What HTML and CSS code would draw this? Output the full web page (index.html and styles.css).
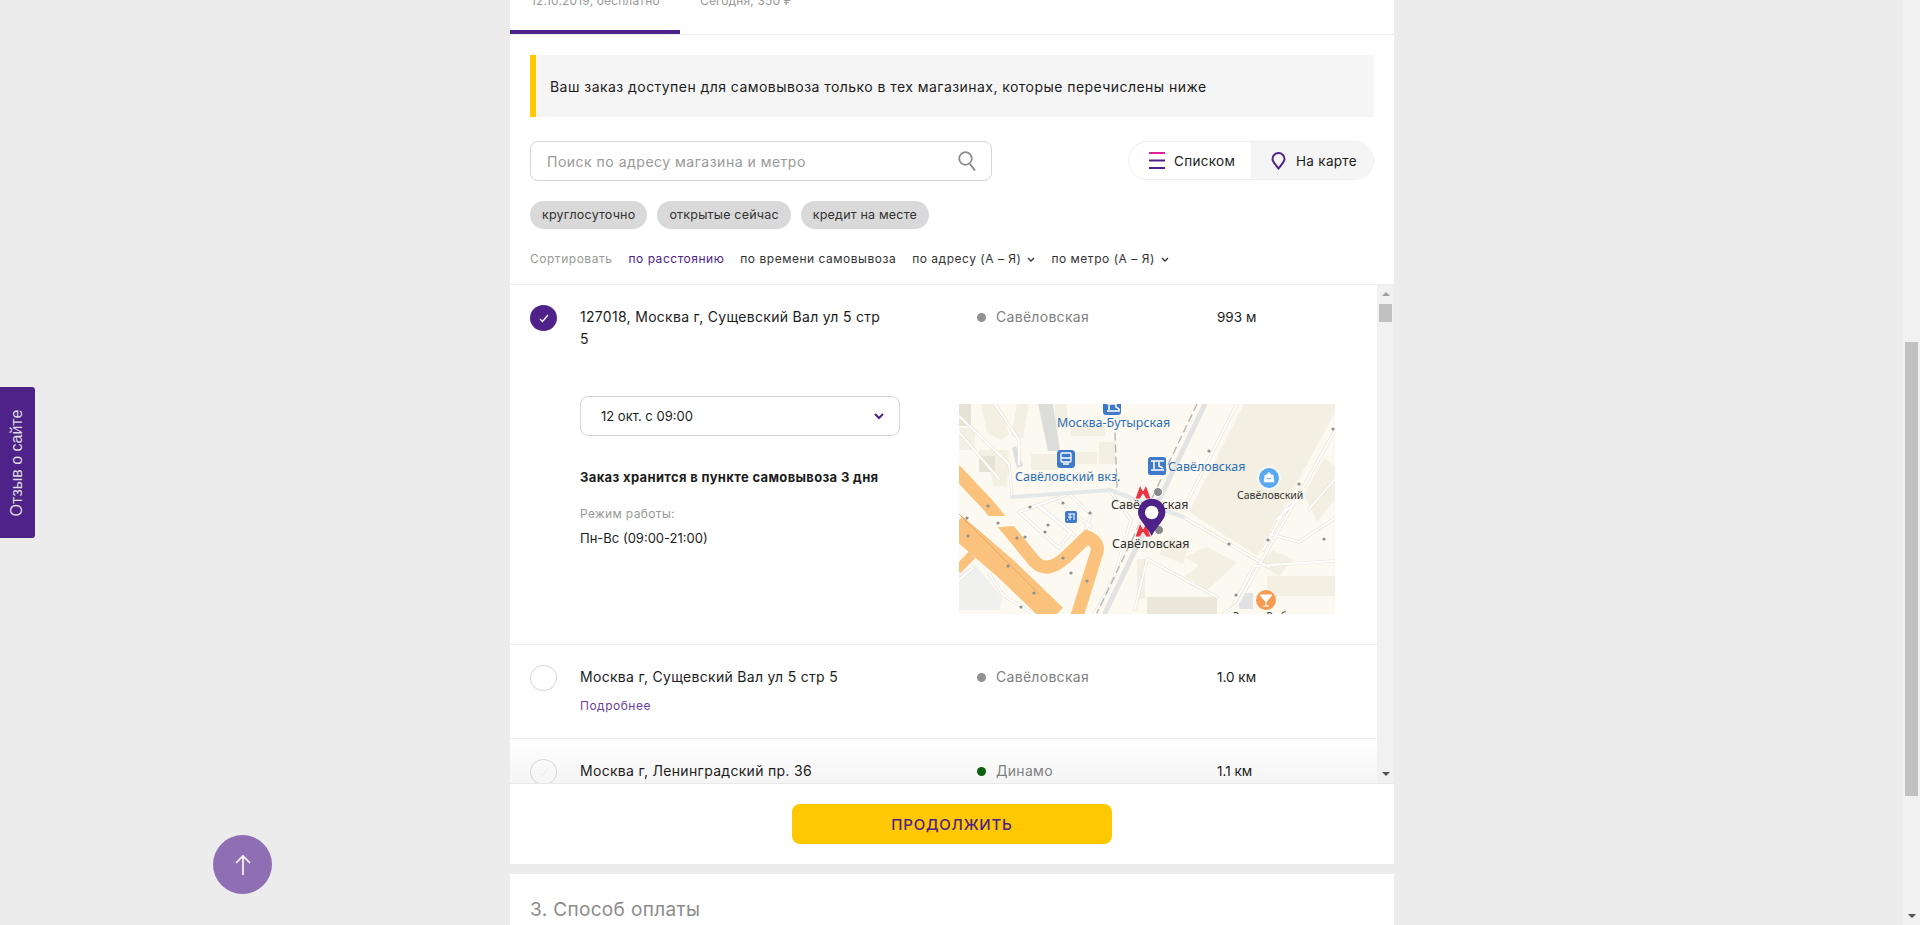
FILE: index.html
```html
<!DOCTYPE html>
<html>
    <head>
        <meta charset="UTF-8">
        <title>Способ получения</title>
        <link rel="stylesheet" href="styles.css">
    </head>
    <body>
        <a class="feedback" href="#"><span>Отзыв о сайте</span></a>
        <a class="to-top" href="#">
            <svg width="18" height="22" viewBox="0 0 18 22"><path d="M2 9 9 2l7 7M9 2v19" fill="none" stroke="#fff" stroke-width="1.6"/></svg>
        </a>

        <main class="page">
            <section class="card">
                <div class="tabs">
                    <div class="tab active">12.10.2019, бесплатно</div>
                    <div class="tab">Сегодня, 350 ₽</div>
                </div>

                <div class="controls">
                    <div class="notice">Ваш заказ доступен для самовывоза только в тех магазинах, которые перечислены ниже</div>

                    <div class="search-row">
                        <div class="search">
                            <span>Поиск по адресу магазина и метро</span>
                            <svg width="18" height="20" viewBox="0 0 18 20"><circle cx="7.5" cy="7.5" r="6.3" fill="none" stroke="#8c8c8c" stroke-width="1.8"/><path d="m12 13 5 6.5" stroke="#8c8c8c" stroke-width="2"/></svg>
                        </div>
                        <div class="view-toggle">
                            <div class="view-btn">
                                <svg width="16" height="17" viewBox="0 0 16 17"><path d="M0 1h16" stroke="#e0219a" stroke-width="2"/><path d="M0 8.5h16M0 16h16" stroke="#4e2289" stroke-width="2"/></svg>
                                Списком
                            </div>
                            <div class="view-btn off">
                                <svg width="15" height="18" viewBox="0 0 15 18"><path d="M7.500 16.500C5 13 1.500 10 1.500 7a6 6 0 0 1 12 0c0 3-3.500 6-6 9.500Z" fill="none" stroke="#4e2289" stroke-width="2"/></svg>
                                На карте
                            </div>
                        </div>
                    </div>

                    <div class="chips">
                        <span class="chip">круглосуточно</span>
                        <span class="chip">открытые сейчас</span>
                        <span class="chip">кредит на месте</span>
                    </div>

                    <div class="sort">
                        <span class="sort-title">Сортировать</span>
                        <span class="sort-current">по расстоянию</span>
                        <span>по времени самовывоза</span>
                        <span>по адресу (А – Я) <svg class="caret" width="8" height="5" viewBox="0 0 8 5"><path d="m1 1 3 3 3-3" fill="none" stroke="#333" stroke-width="1.300"/></svg></span>
                        <span>по метро (А – Я) <svg class="caret" width="8" height="5" viewBox="0 0 8 5"><path d="m1 1 3 3 3-3" fill="none" stroke="#333" stroke-width="1.300"/></svg></span>
                    </div>
                </div>

                <div class="list-wrap">
                    <div class="list">
                        <div class="shop first">
                            <div class="shop-head">
                                <span class="radio checked">
                                    <svg width="10" height="9" viewBox="0 0 10 9"><path d="m1 5 2.500 2.500L9 1" fill="none" stroke="#fff" stroke-width="1.300"/></svg>
                                </span>
                                <div class="address">127018, Москва г, Сущевский Вал ул 5 стр<br>5</div>
                                <div class="metro"><i class="dot grey"></i>Савёловская</div>
                                <div class="distance">993 м</div>
                            </div>
                            <div class="detail">
                                <div class="detail-left">
                                    <div class="date-select">
                                        12 окт. с 09:00
                                        <svg width="10" height="7" viewBox="0 0 10 7"><path d="m1 1 4 4 4-4" fill="none" stroke="#4e2289" stroke-width="2"/></svg>
                                    </div>
                                    <div class="keep">Заказ хранится в пункте самовывоза 3 дня</div>
                                    <div class="hours-title">Режим работы:</div>
                                    <div class="hours">Пн-Вс (09:00-21:00)</div>
                                </div>
                                <svg class="map" width="376" height="210" viewBox="0 0 376 210">
                                    <defs>
                                        <path id="lanes" d="M0 28 40 75M60 108l40 36 12-16-34-28M80 103l42 34M100 97l32 26M60 108l50-18 22 20-12 36M0 12 50 60l3 32M36 0l24 36v24M150 86l22 30-18 60-18 33M224 113l86 50M278 0 224 106M378 23 278 201 264 210M340 80l-36 66M350 105l26-30M318 115l22-20M310 130l30 8 36-24M30 170l15 22 30 18M176 205l12-50 70 38M0 176l14-12M275 200l20-38 80-5"/>
                                    </defs>
                                    <rect width="376" height="210" fill="#fcf9f1"/>

                                    <g fill="#f3efe3">
                                        <path d="M285 0h85l5 10-77 142-68-44Z"/>
                                        <path d="M22 0h18l10 30-8 6-14-8ZM0 24h16v22H0Z"/>
                                        <path d="M20 46h30l-2 36H34l-2-14H20Z"/>
                                        <path d="M58 0h12l-6 34-12-2ZM96 0h12v24H96ZM112 22h34v10h-34ZM140 38h16v22h-16Z"/>
                                        <path d="M72 50h28v16H72ZM116 48h22v12h-22Z"/>
                                        <path d="M178 155h8v40h-8Z"/>
                                        <path d="M248 143l30 16-30 27-22-14 14-10-14-9ZM224 160l-24-10 12-18 18 10Z"/>
                                        <path d="M188 193h70v17h-70Z" fill="#ebe7da"/>
                                        <path d="M340 0h36v8l-8 16ZM345 90l20-36 11 8v34l-18 22ZM300 160l14-14 20 10-14 16ZM308 172h68v20h-68Z"/>
                                    </g>
                                    <path d="M0 0h12v22H0ZM20 52h16v16H20Z" fill="#e6e2d5"/>
                                    <path d="M79 0h15l7 47H89Z" fill="#dcdcdb"/>
                                    <path d="M57 42l7 20-6 2-5-20Z" fill="#dcdddc"/>
                                    <path d="M0 171l16-10 27 32-2 13H0Z" fill="#f0f0ee"/>
                                    <path d="M280 189h14v16h-14Z" fill="#dfe1e2"/>

                                    <g fill="none" stroke-linejoin="round" stroke-linecap="round">
                                        <use href="#lanes" stroke="#e8e5da" stroke-width="3.200"/>
                                        <use href="#lanes" stroke="#fff" stroke-width="1.800"/>
                                        <path d="M53 93l98-7 73 27" stroke="#e5e8e8" stroke-width="4"/>
                                        <path d="M246 0 146 209" stroke="#e2e3e2" stroke-width="5"/>
                                        <path d="M238 0 138 209M156 29l2 54" stroke="#b6b8b8" stroke-width="1.400" stroke-dasharray="7 5"/>
                                    </g>

                                    <g fill="none" stroke="#fac27d">
                                        <path d="M-4 121 46 164 96 212" stroke-width="23"/>
                                        <path d="M-4 66 29 101 76 158Q88 170 106 154L128 133Q140 138 138 148L118 212" stroke-width="13"/>
                                        <path d="M-2 166 13 151" stroke-width="9"/>
                                    </g>
                                    <path d="M-4 106 80 190" fill="none" stroke="#e4a867" stroke-width="1"/>
                                    <path d="M30 112h18l8 10-16 1-10 6Z" fill="#fcf9f1"/>

                                    <g fill="#8f8f8f">
                                        <circle cx="29" cy="102" r="1.600"/><circle cx="39" cy="119" r="1.600"/><circle cx="58" cy="134" r="1.600"/>
                                        <circle cx="71" cy="103" r="1.600"/><circle cx="89" cy="121" r="1.600"/><circle cx="104" cy="99" r="1.600"/>
                                        <circle cx="131" cy="109" r="1.600"/><circle cx="66" cy="133" r="1.600"/><circle cx="86" cy="128" r="1.600"/>
                                        <circle cx="49" cy="162" r="1.600"/><circle cx="104" cy="154" r="1.600"/><circle cx="128" cy="177" r="1.600"/>
                                        <circle cx="112" cy="169" r="1.600"/><circle cx="75" cy="189" r="1.600"/><circle cx="62" cy="203" r="1.600"/>
                                        <circle cx="250" cy="47" r="1.600"/><circle cx="374" cy="25" r="1.600"/><circle cx="340" cy="80" r="1.600"/>
                                        <circle cx="309" cy="136" r="1.600"/><circle cx="270" cy="140" r="1.600"/><circle cx="277" cy="191" r="1.600"/>
                                        <circle cx="8" cy="114" r="1.600"/><circle cx="9" cy="132" r="1.600"/><circle cx="365" cy="135" r="1.600"/>
                                    </g>

                                    <rect x="144" y="-8" width="18" height="19" rx="3" fill="#3f79c9"/>
                                    <path d="M148 0h9v3l3 2v2h-12M150 1v5" fill="none" stroke="#fff" stroke-width="1.500"/>
                                    <rect x="98" y="46" width="18" height="18" rx="3.500" fill="#3f79c9"/>
                                    <path d="M103 49h8q1 0 1 1v7q0 1-1 1h-8q-1 0-1-1v-7q0-1 1-1ZM102 54h10M104 60h6" fill="none" stroke="#fff" stroke-width="1.300"/>
                                    <rect x="189" y="53" width="18" height="18" rx="2.500" fill="#3f79c9"/>
                                    <path d="M192 57h13M195 57v8M192 66h13M200 58v4l4 2" fill="none" stroke="#fff" stroke-width="1.500"/>
                                    <rect x="106" y="107" width="12" height="12" rx="2" fill="#3f79c9"/>
                                    <path d="M109 110h7M111 110v6M115 110v6M109 113h4M108 116h1" fill="none" stroke="#fff"/>

                                    <circle cx="310" cy="74" r="12" fill="#fff" opacity=".5"/>
                                    <circle cx="310" cy="74" r="10" fill="#5aa9f0"/>
                                    <path d="M306 71h8l1 7h-10ZM308 71q2-5 4 0" fill="#fff" stroke="#fff" stroke-width=".6"/>
                                    <path d="M307.500 74q2.500 2 5 0" fill="none" stroke="#5aa9f0"/>
                                    <circle cx="307" cy="196" r="10" fill="#f79a52"/>
                                    <path d="M301 191h12l-6 7ZM307 197v5M304 202h6" fill="#fff" stroke="#fff"/>

                                    <path d="M176 95l5-14 3 6 3-6 5 14h-5l-3-5-3 5Z" fill="#ef3340" stroke="#fff" stroke-width=".8"/>
                                    <path d="M176 133l5-14 3 6 3-6 5 14h-5l-3-5-3 5Z" fill="#ef3340" stroke="#fff" stroke-width=".8"/>
                                    <circle cx="199" cy="88" r="4.500" fill="#8a8a8a" stroke="#fff"/>
                                    <circle cx="200" cy="126" r="4.500" fill="#8a8a8a" stroke="#fff"/>

                                    <g class="map-label blue">
                                        <text x="98" y="23">Москва-Бутырская</text>
                                        <text x="56" y="77">Савёловский вкз.</text>
                                        <text x="209" y="67">Савёловская</text>
                                    </g>
                                    <g class="map-label dark">
                                        <text x="152" y="105">Савёловская</text>
                                        <text x="153" y="144">Савёловская</text>
                                        <text class="small" x="278" y="95">Савёловский</text>
                                        <text class="small" x="274" y="216">Залив Рыба</text>
                                    </g>

                                    <path d="M192.700 132C188 122 179 116 179 108.500a13.700 13.700 0 0 1 27.400 0C206.400 116 197.500 122 192.700 132Z" fill="#4e2289"/>
                                    <circle cx="192.700" cy="108.500" r="6.800" fill="#fff"/>
                                </svg>
                            </div>
                        </div>

                        <div class="shop">
                            <div class="shop-head">
                                <span class="radio"></span>
                                <div class="address">Москва г, Сущевский Вал ул 5 стр 5<a class="more" href="#">Подробнее</a></div>
                                <div class="metro"><i class="dot grey"></i>Савёловская</div>
                                <div class="distance">1.0 км</div>
                            </div>
                        </div>

                        <div class="shop last">
                            <div class="shop-head">
                                <span class="radio">
                                    <svg width="10" height="9" viewBox="0 0 10 9"><path d="m1 5 2.500 2.500L9 1" fill="none" stroke="#eee" stroke-width="1.300"/></svg>
                                </span>
                                <div class="address">Москва г, Ленинградский пр. 36</div>
                                <div class="metro"><i class="dot green"></i>Динамо</div>
                                <div class="distance">1.1 км</div>
                            </div>
                        </div>
                    </div>

                    <div class="list-bar">
                        <i class="arrow-up"></i>
                        <b class="list-thumb"></b>
                        <i class="arrow-down"></i>
                    </div>
                </div>

                <div class="actions">
                    <button class="continue">ПРОДОЛЖИТЬ</button>
                </div>
            </section>

            <section class="card next">
                <h2>3. Способ оплаты</h2>
            </section>
        </main>

        <div class="page-bar">
            <b class="page-thumb"></b>
            <i class="arrow-down"></i>
        </div>
    </body>
</html>
```

FILE: styles.css
```css
*{
    box-sizing:border-box;
}

html, body{
    height:925px;
    overflow:hidden;
}

body{
    margin:0;
    display:flex;
    background-color:#ececec;
    color:#1c1c1c;
    font-family:Inter, "Noto Sans", sans-serif;
    font-size:14px;
    letter-spacing:.3px;
}

a{
    text-decoration:none;
}

.page{
    flex:1;
    min-width:0;
}

.card{
    width:884px;
    margin-left:510px;
    background-color:#fff;
}

.next{
    margin-top:10px;
    padding:27px 20px 0;
    height:60px;
}

.next h2{
    margin:0;
    font-size:19px;
    font-weight:400;
    letter-spacing:.35px;
    line-height:18px;
    color:#8c8c8c;
}

/* tabs are scrolled half out of view */
.tabs{
    display:flex;
    height:70px;
    margin-top:-35px;
    border-bottom:1px solid #eee;
}

.tab{
    width:170px;
    padding-top:28px;
    padding-left:21px;
    color:#999;
    font-size:12px;
    letter-spacing:.15px;
}

.tab.active{
    border-bottom:4px solid #4e2289;
    height:69px;
}

.tab + .tab{
    padding-left:20px;
}

.controls{
    padding:20px 20px 16px;
}

.notice{
    display:flex;
    align-items:center;
    height:62px;
    padding-left:14px;
    border-left:6px solid #ffc800;
    background-color:#f5f5f5;
    letter-spacing:.45px;
}

.search-row{
    display:flex;
    justify-content:space-between;
    margin-top:24px;
}

.search{
    display:flex;
    justify-content:space-between;
    align-items:center;
    width:462px;
    height:40px;
    padding:0 15px 0 16px;
    border:1px solid #d6d6d6;
    border-radius:8px;
    color:#999;
    letter-spacing:.5px;
}

.view-toggle{
    display:flex;
    width:246px;
    height:39px;
    border:1px solid #eee;
    border-radius:20px;
    overflow:hidden;
    font-size:13.500px;
}

.view-btn{
    display:flex;
    align-items:center;
    gap:9px;
    width:123px;
    padding-left:20px;
}

.view-btn.off{
    gap:10px;
    background-color:#f5f5f5;
    padding-left:20px;
}

.chips{
    display:flex;
    gap:10px;
    margin-top:20px;
}

.chip{
    display:flex;
    align-items:center;
    height:28px;
    padding:0 12px 2px;
    border-radius:14px;
    background-color:#d9d9d9;
    color:#333;
    font-size:12.500px;
    letter-spacing:.2px;
}

.sort{
    display:flex;
    gap:16px;
    align-items:center;
    height:20px;
    margin-top:19px;
    color:#333;
    font-size:12px;
    letter-spacing:.52px;
}

.sort-title{
    color:#999;
}

.sort-current{
    color:#4e2289;
}

.caret{
    margin-left:2px;
    vertical-align:1px;
}

.list-wrap{
    display:flex;
    height:500px;
    border-top:1px solid #eee;
    border-bottom:1px solid #e8e8e8;
    overflow:hidden;
}

.list{
    flex:1;
    min-width:0;
}

.shop{
    padding:20px 0 0 20px;
    height:94px;
    border-bottom:1px solid #eee;
}

.shop.first{
    height:360px;
}

.shop.last{
    height:44px;
    border-bottom:none;
    background:linear-gradient(to bottom, #fff, #f5f5f5);
}

.shop-head{
    display:grid;
    grid-template-columns:50px 397px 240px 1fr;
}

.radio{
    display:flex;
    align-items:center;
    justify-content:center;
    width:27px;
    height:26px;
    border:1px solid #d9d9d9;
    border-radius:50%;
    background-color:#fff;
}

.shop.last .radio{
    background-color:transparent;
}

.radio.checked{
    border:none;
    background-color:#4e2289;
}

.address, .metro, .distance{
    padding-top:1px;
    line-height:22px;
}

.distance{
    font-size:13.500px;
    letter-spacing:0;
}

.more{
    display:block;
    margin-top:7px;
    color:#6b3fa0;
    font-size:12px;
    letter-spacing:.5px;
    line-height:22px;
}

.metro{
    color:#808080;
}

.dot{
    display:inline-block;
    width:9px;
    height:9px;
    margin-right:10px;
    border-radius:50%;
}

.grey{
    background-color:#919191;
}

.green{
    background-color:#0b5e12;
}

.detail{
    display:flex;
    gap:59px;
    margin:46px 0 0 50px;
    font-size:13px;
    letter-spacing:0;
}

.detail-left{
    width:320px;
}

.date-select{
    display:flex;
    justify-content:space-between;
    align-items:center;
    height:40px;
    padding:0 15px 0 20px;
    border:1px solid #d6d6d6;
    border-radius:8px;
}

.keep{
    margin-top:32px;
    font-weight:700;
    letter-spacing:.35px;
    line-height:18px;
}

.hours-title{
    margin-top:19px;
    color:#999;
    font-size:12px;
    letter-spacing:.35px;
    line-height:18px;
}

.hours{
    margin-top:6px;
    line-height:18px;
}

.map{
    display:block;
    margin-top:8px;
    flex:none;
}

.map-label{
    font-family:"Noto Sans", sans-serif;
    font-size:12.500px;
    letter-spacing:0;
}

.map-label.blue{
    fill:#2f6fb5;
}

.map-label.dark{
    fill:#333;
}

.map-label .small{
    font-size:10.500px;
}

.list-bar{
    position:relative;
    flex:none;
    width:17px;
    background-color:#f1f1f1;
}

.list-thumb{
    display:block;
    width:13px;
    height:18px;
    margin:19px 0 0 2px;
    background-color:#c1c1c1;
}

.arrow-up, .arrow-down{
    position:absolute;
    left:5px;
    width:0;
    height:0;
    border-left:4px solid transparent;
    border-right:4px solid transparent;
}

.arrow-up{
    top:7px;
    border-bottom:4px solid #a0a0a0;
}

.arrow-down{
    bottom:7px;
    border-top:4px solid #505050;
}

.actions{
    display:flex;
    justify-content:center;
    padding:20px 0;
}

.continue{
    width:320px;
    height:40px;
    border:none;
    border-radius:8px;
    background-color:#ffc800;
    color:#4e2289;
    font-family:inherit;
    font-size:15px;
    font-weight:500;
    letter-spacing:.8px;
}

.page-bar{
    position:relative;
    flex:none;
    width:17px;
    height:925px;
    background-color:#f1f1f1;
}

.page-thumb{
    display:block;
    width:13px;
    height:454px;
    margin:342px 0 0 2px;
    background-color:#c1c1c1;
}

.feedback{
    position:fixed;
    left:0;
    top:387px;
    display:flex;
    align-items:center;
    justify-content:center;
    width:35px;
    height:151px;
    border-radius:0 3px 3px 0;
    background-color:#4e2289;
    color:#ddd;
    font-family:"Liberation Sans", sans-serif;
    font-size:16px;
    letter-spacing:0;
}

.feedback span{
    transform:rotate(-90deg);
    white-space:nowrap;
}

.to-top{
    position:fixed;
    left:213px;
    top:835px;
    display:flex;
    align-items:center;
    justify-content:center;
    width:59px;
    height:59px;
    border-radius:50%;
    background-color:#8f6fb3;
}
```
